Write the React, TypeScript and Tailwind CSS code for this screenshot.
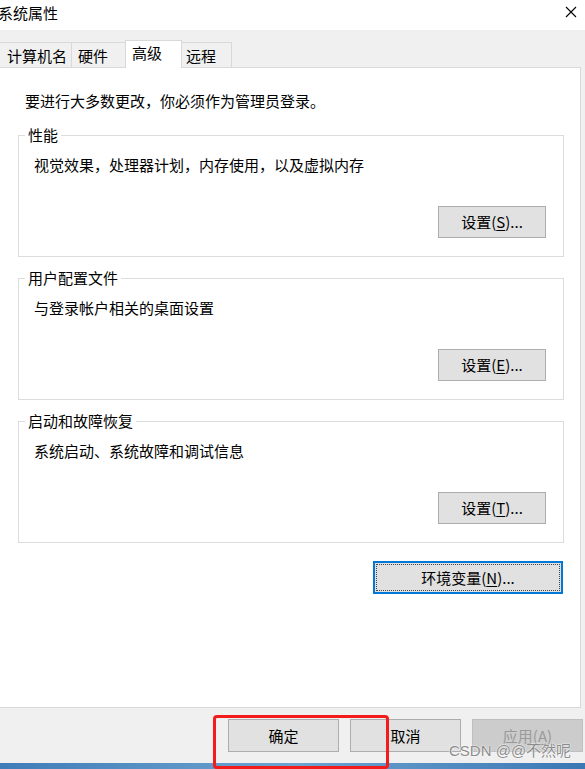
import React from 'react';

const groups = [
  { title: '性能', desc: '视觉效果，处理器计划，内存使用，以及虚拟内存', key: 'S' },
  { title: '用户配置文件', desc: '与登录帐户相关的桌面设置', key: 'E' },
  { title: '启动和故障恢复', desc: '系统启动、系统故障和调试信息', key: 'T' },
];

const WinButton: React.FC<{ children: React.ReactNode; className?: string; disabled?: boolean }> = ({ children, className = '', disabled }) => (
  <button
    className={`flex h-[33px] items-center justify-center border leading-[20px] ${
      disabled ? 'border-[#bfbfbf] bg-[#cccccc] text-[#9a9a9a]' : 'border-[#adadad] bg-[#e1e1e1] text-black'
    } ${className}`}
  >
    {children}
  </button>
);

export default function App() {
  return (
    <div className="relative flex h-[769px] w-[585px] flex-col overflow-hidden bg-[#f0f0f0] font-['Noto_Sans_CJK_SC','Liberation_Sans',sans-serif] text-[15px] text-black">
      {/* title bar */}
      <div className="flex h-[30px] items-start justify-between bg-white">
        <span className="-ml-[2px] pt-[3px] leading-[20px]">系统属性</span>
        <svg className="mr-[8px] mt-[6px] h-[12px] w-[12px]" viewBox="0 0 12 12" fill="none" stroke="#000" strokeWidth="1.1">
          <path d="M1 1L11 11M11 1L1 11" />
        </svg>
      </div>

      {/* tabs */}
      <div className="flex h-[37px] items-end">
        <div className="h-[25px] w-[72px] border-r border-t border-[#d9d9d9] pl-[7px] pt-[3px] leading-[20px]">计算机名</div>
        <div className="h-[25px] w-[53px] border-t border-[#d9d9d9] pl-[6px] pt-[3px] leading-[20px]">硬件</div>
        <div className="relative z-10 -mb-px h-[28px] w-[57px] border-l border-r border-t border-[#d9d9d9] bg-white pl-[6px] pt-[2px] leading-[20px]">高级</div>
        <div className="h-[25px] w-[50px] border-r border-t border-[#d9d9d9] pl-[4px] pt-[3px] leading-[20px]">远程</div>
      </div>

      {/* panel */}
      <div className="-ml-px flex h-[641px] w-[582px] flex-col border border-[#d9d9d9] bg-white">
        <p className="pl-[25px] pt-[23px] leading-[20px]">要进行大多数更改，你必须作为管理员登录。</p>

        {groups.map((g, i) => (
          <fieldset key={g.key} className={`ml-[18px] w-[546px] border border-[#dcdcdc] ${i === 0 ? 'mt-[14px]' : 'mt-[11px]'}`}>
            <legend className="ml-[6px] px-[3px] leading-[20px]">{g.title}</legend>
            <div className="flex flex-col pb-[18px] pl-[15px] pr-[17px] pt-[10px]">
              <p className="leading-[20px]">{g.desc}</p>
              <div className="mt-[31px] flex justify-end">
                <WinButton className="!h-[32px] w-[108px]">
                  设置(<span className="underline underline-offset-2">{g.key}</span>)...
                </WinButton>
              </div>
            </div>
          </fieldset>
        ))}

        <div className="mr-[17px] mt-[18px] flex justify-end">
          <button className="h-[33px] w-[190px] border-2 border-[#0078d7] bg-[#e1e1e1] p-px">
            <span className="flex h-full w-full items-center justify-center border border-dotted border-[#444] leading-[20px]">
              环境变量(<span className="underline underline-offset-2">N</span>)...
            </span>
          </button>
        </div>
      </div>

      {/* bottom buttons */}
      <div className="ml-[228px] mt-[11px] flex gap-[11px]">
        <WinButton className="w-[111px]">确定</WinButton>
        <WinButton className="w-[111px]">取消</WinButton>
        <WinButton className="w-[111px]" disabled>
          应用(<span className="underline underline-offset-2">A</span>)
        </WinButton>
      </div>

      <div className="mt-auto h-[6px] bg-gradient-to-r from-[#3f7db8] via-[#6ea3d0] to-[#3a78b4]" />

      {/* annotation + watermark */}
      <div className="absolute left-[213px] top-[715px] h-[54px] w-[176px] rounded-[4px] border-[3px] border-[#f31c1c]" />
      <div className="absolute left-[449px] top-[741px] font-['Liberation_Sans','Noto_Sans_CJK_SC',sans-serif] text-[15px] leading-[20px] text-[#8c8c8c] [text-shadow:0_0_2px_#fff,0_0_1px_#fff]">
        CSDN @@不然呢
      </div>
    </div>
  );
}
